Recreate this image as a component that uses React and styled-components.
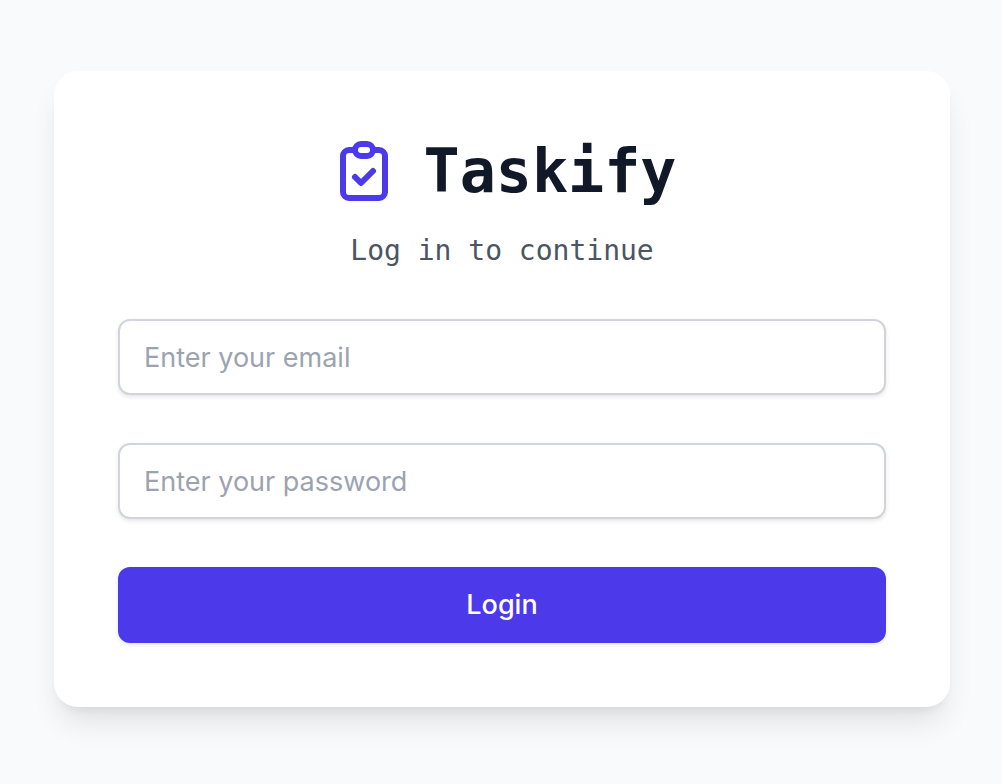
import React from "react";
import styled, { createGlobalStyle } from "styled-components";

const GlobalStyle = createGlobalStyle`
  *, *::before, *::after { box-sizing: border-box; }
  body {
    margin: 0;
    background: #f9fafb;
    font-family: Inter, "Liberation Sans", sans-serif;
  }
`;

const Page = styled.main`
  min-height: 100vh;
  display: flex;
  align-items: center;
  justify-content: center;
  padding: 64px 52px 70px 54px;
`;

const Card = styled.section`
  width: 100%;
  max-width: 896px;
  padding: 64px;
  background: #ffffff;
  border-radius: 24px;
  box-shadow: 0 20px 30px -6px rgba(0, 0, 0, 0.1), 0 8px 12px -8px rgba(0, 0, 0, 0.1);
`;

const Header = styled.header`
  display: flex;
  flex-direction: column;
  align-items: center;
  gap: 24px;
  margin-bottom: 48px;
  font-family: "DejaVu Sans Mono", monospace;
`;

const Brand = styled.div`
  display: flex;
  align-items: center;
  gap: 24px;
`;

const Logo = styled.svg`
  width: 72px;
  height: 72px;
  color: #4b39ea;
`;

const Title = styled.h1`
  margin: 0;
  font-size: 60px;
  line-height: 72px;
  font-weight: 700;
  color: #111827;
`;

const Subtitle = styled.p`
  margin: 0;
  font-size: 28px;
  line-height: 40px;
  color: #4b5563;
`;

const Form = styled.form`
  display: flex;
  flex-direction: column;
  gap: 48px;
`;

const Field = styled.input`
  display: block;
  width: 100%;
  height: 76px;
  padding: 16px 24px;
  border: 2px solid #d1d5db;
  border-radius: 12px;
  background: #ffffff;
  color: #111827;
  font-family: inherit;
  font-size: 27px;
  line-height: 40px;
  box-shadow: 0 2px 4px rgba(0, 0, 0, 0.1);
  &::placeholder { color: #9ca3af; opacity: 1; }
`;

const SubmitButton = styled.button`
  height: 76px;
  border: 0;
  border-radius: 12px;
  background: #4b39ea;
  color: #ffffff;
  font-family: inherit;
  font-size: 27px;
  line-height: 40px;
  font-weight: 500;
  cursor: pointer;
  box-shadow: 0 2px 4px rgba(0, 0, 0, 0.1);
`;

export default function App() {
  return (
    <Page>
      <GlobalStyle />
      <Card>
        <Header>
          <Brand>
            <Logo viewBox="0 0 24 24" fill="none" stroke="currentColor" strokeWidth="2" strokeLinecap="round" strokeLinejoin="round" aria-hidden="true">
              <path d="M9 5H7a2 2 0 0 0-2 2v12a2 2 0 0 0 2 2h10a2 2 0 0 0 2-2V7a2 2 0 0 0-2-2h-2M9 5a2 2 0 0 0 2 2h2a2 2 0 0 0 2-2M9 5a2 2 0 0 1 2-2h2a2 2 0 0 1 2 2m-6 9 2 2 4-4" />
            </Logo>
            <Title>Taskify</Title>
          </Brand>
          <Subtitle>Log in to continue</Subtitle>
        </Header>
        <Form onSubmit={(e) => e.preventDefault()}>
          <Field type="email" name="email" aria-label="Email" placeholder="Enter your email" />
          <Field type="password" name="password" aria-label="Password" placeholder="Enter your password" />
          <SubmitButton type="submit">Login</SubmitButton>
        </Form>
      </Card>
    </Page>
  );
}
